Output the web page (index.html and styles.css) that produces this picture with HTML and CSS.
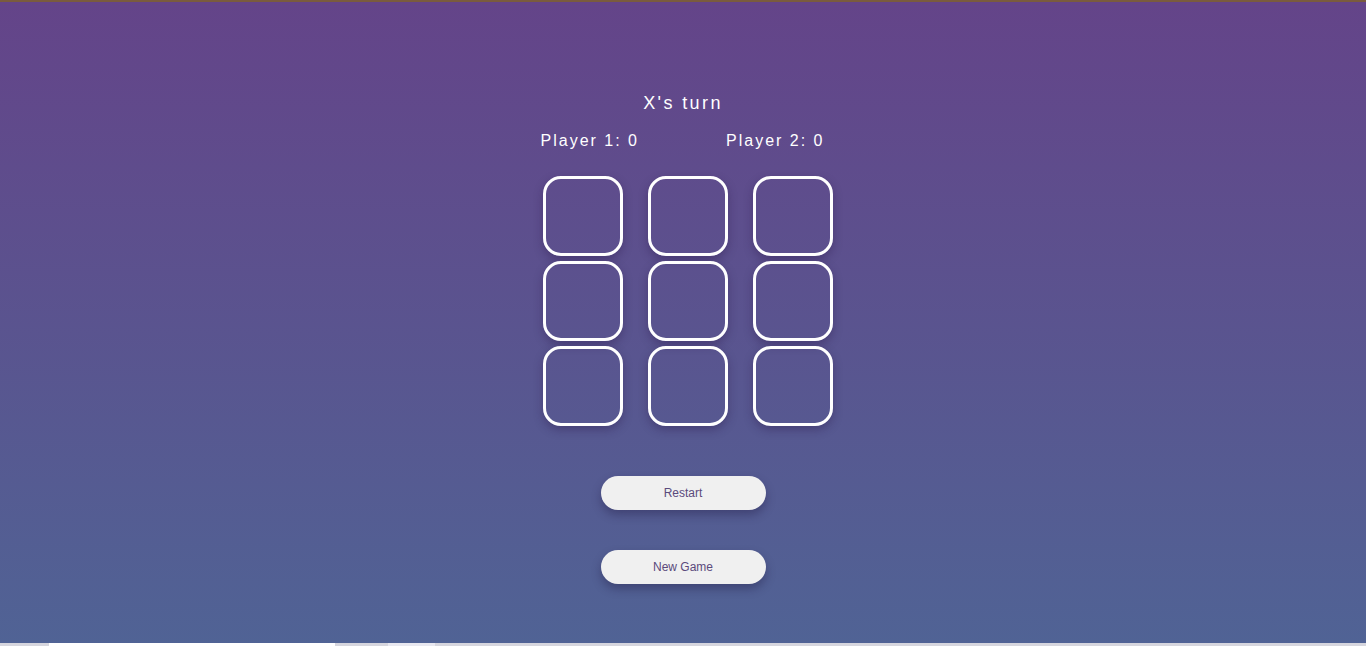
FILE: index.html
```html
<!DOCTYPE html>
<html>
<head>
<meta charset="utf-8">
<link rel="stylesheet" href="styles.css">
</head>
<body>
<div class="page">
  <main class="game">
    <h1 class="turn">X's turn</h1>
    <div class="scores">
      <span class="score">Player 1: 0</span>
      <span class="score">Player 2: 0</span>
    </div>
    <div class="board">
      <div class="cell"></div><div class="cell"></div><div class="cell"></div>
      <div class="cell"></div><div class="cell"></div><div class="cell"></div>
      <div class="cell"></div><div class="cell"></div><div class="cell"></div>
    </div>
    <div class="actions">
      <button class="btn">Restart</button>
      <button class="btn">New Game</button>
    </div>
  </main>
  <div class="scrollbar">
    <span class="sb-a"></span><span class="sb-b"></span><span class="sb-c"></span><span class="sb-d"></span><span class="sb-e"></span>
  </div>
</div>
</body>
</html>
```
FILE: styles.css
```css
html, body {
  margin: 0;
  padding: 0;
  height: 100%;
  overflow: hidden;
}
body {
  font-family: "Liberation Sans", Arial, sans-serif;
}
.page {
  height: 646px;
  display: flex;
  flex-direction: column;
  border-top: 2px solid #7a5b3e;
  box-sizing: border-box;
  background: linear-gradient(to bottom, #644489, #506395);
}
.game {
  flex: 1;
  display: flex;
  flex-direction: column;
  align-items: center;
}
.turn {
  margin: 91px 0 0;
  font-size: 18px;
  font-weight: normal;
  letter-spacing: 2.4px;
  color: #fff;
  line-height: 20px;
}
.scores {
  margin-top: 19px;
  display: flex;
  gap: 87px;
  color: #fff;
  font-size: 16px;
  letter-spacing: 2px;
  line-height: 18px;
  padding-right: 1px;
}
.board {
  margin-top: 26px;
  padding-left: 10px;
  display: grid;
  grid-template-columns: repeat(3, 80px);
  grid-auto-rows: 80px;
  column-gap: 25px;
  row-gap: 5px;
}
.cell {
  box-sizing: border-box;
  border: 3px solid #fff;
  border-radius: 18px;
  box-shadow: 0 4px 10px rgba(40, 20, 70, 0.35);
}
.actions {
  margin-top: 50px;
  display: flex;
  flex-direction: column;
  align-items: center;
  gap: 40px;
}
.btn {
  width: 165px;
  height: 34px;
  border: none;
  border-radius: 17px;
  background: #f0f0f0;
  color: #5b4a7c;
  font-family: "Liberation Sans", Arial, sans-serif;
  font-size: 12px;
  box-shadow: 0 5px 10px rgba(30, 20, 60, 0.35);
}
.scrollbar {
  height: 3px;
  display: flex;
  background: #d6d6de;
}
.sb-a { width: 49px; }
.sb-b { width: 286px; background: #ffffff; }
.sb-c { width: 53px; }
.sb-d { width: 47px; background: #e8e8f0; }
.sb-e { flex: 1; }
```
